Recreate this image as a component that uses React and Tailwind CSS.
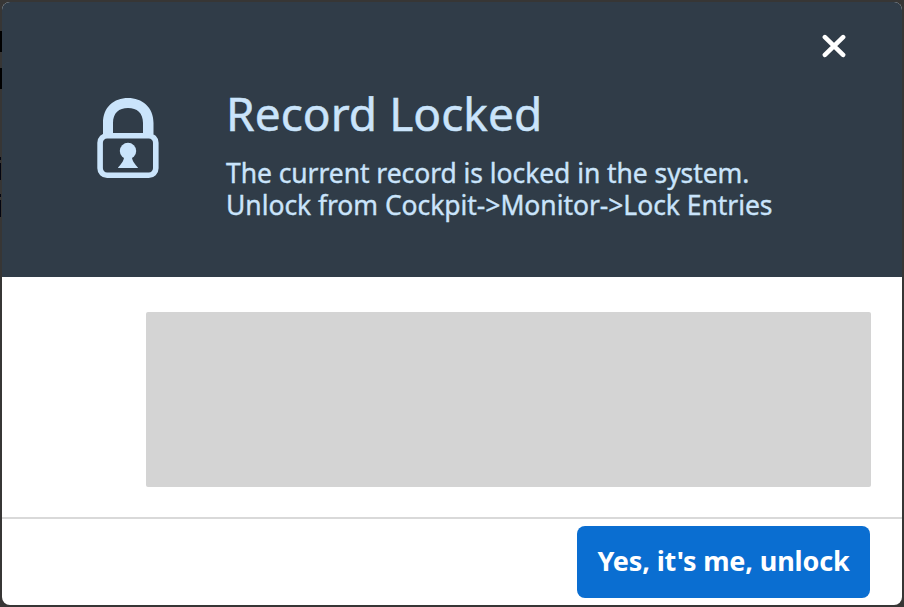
function LockIcon() {
  return (
    <svg className="block h-[82px] w-[62px]" viewBox="0 0 62 82" fill="none">
      <path d="M6 37V26C6 10 17 1 31 1S56.500 10 56.500 26V37H46V26C46 16 40 11 31 11S16 16 16 26V37Z" fill="#cae4fb" />
      <rect x="3.100" y="38.700" width="55.700" height="39.500" rx="7" stroke="#cae4fb" strokeWidth="5.600" />
      <circle cx="31" cy="54" r="8.200" fill="#cae4fb" />
      <path d="M27 60H35C35 64 38 67 41.200 71H20.800C24 67 27 64 27 60Z" fill="#cae4fb" />
    </svg>
  );
}

function CloseIcon() {
  return (
    <svg className="block h-6 w-6" viewBox="0 0 24 24" fill="none" stroke="#fff" strokeWidth="4.600" strokeLinecap="round">
      <path d="M2.900 3.200 21.100 20.800M21.100 3.200 2.900 20.800" />
    </svg>
  );
}

function PageEdge() {
  return (
    <div className="flex w-0.5 shrink-0 flex-col bg-[#373635]">
      <div className="mt-[29px] h-[21px] bg-black" />
      <div className="mt-4 h-[21px] bg-black" />
      <div className="mt-[68px] h-[3px] w-px bg-[#02040f]" />
      <div className="mt-[3px] h-[17px] w-px bg-[#02040f]" />
      <div className="mt-3.5 h-[3px] w-px bg-[#02040f]" />
      <div className="mt-[3px] h-[17px] w-px bg-[#02040f]" />
    </div>
  );
}

export default function App() {
  return (
    <div className="flex h-[607px] w-[904px] overflow-hidden bg-[#373635] py-0.5 font-['Noto_Sans',sans-serif]">
      <PageEdge />
      <div className="flex h-[603px] w-[900px] flex-col overflow-hidden rounded-[8px] bg-white">
        <header className="flex h-[275px] shrink-0 items-start bg-[#303c48] text-[#cae4fb]">
          <div className="mt-[95px] ml-[95px] shrink-0">
            <LockIcon />
          </div>
          <div className="mt-[81px] ml-[67px] w-[580px] shrink-0 whitespace-nowrap">
            <h1 className="text-[46px] leading-[60px] tracking-[0.05px] [-webkit-text-stroke:0.5px_#cae4fb]">Record Locked</h1>
            <div className="mt-3.5 text-[26.500px] leading-8 [-webkit-text-stroke:0.35px_#cae4fb]">
              <p className="tracking-[-0.07px]">The current record is locked in the system.</p>
              <p className="tracking-[-0.06px]">Unlock from Cockpit-&gt;Monitor-&gt;Lock Entries</p>
            </div>
          </div>
          <button className="mt-8 ml-4" aria-label="Close">
            <CloseIcon />
          </button>
        </header>
        <main className="h-[240px] shrink-0 pt-[35px] pl-36">
          <div className="h-[175px] w-[725px] rounded-[2px] bg-[#d4d4d4]" />
        </main>
        <footer className="flex h-[88px] shrink-0 items-start justify-end border-t-2 border-[#d9d9d9] pt-[7px] pr-8">
          <button className="h-[72px] w-[293px] rounded-[8px] bg-[#0a6ed1] pb-0.5 text-[27px] font-bold tracking-[-0.15px] whitespace-nowrap text-white">
            Yes, it's me, unlock
          </button>
        </footer>
      </div>
    </div>
  );
}
